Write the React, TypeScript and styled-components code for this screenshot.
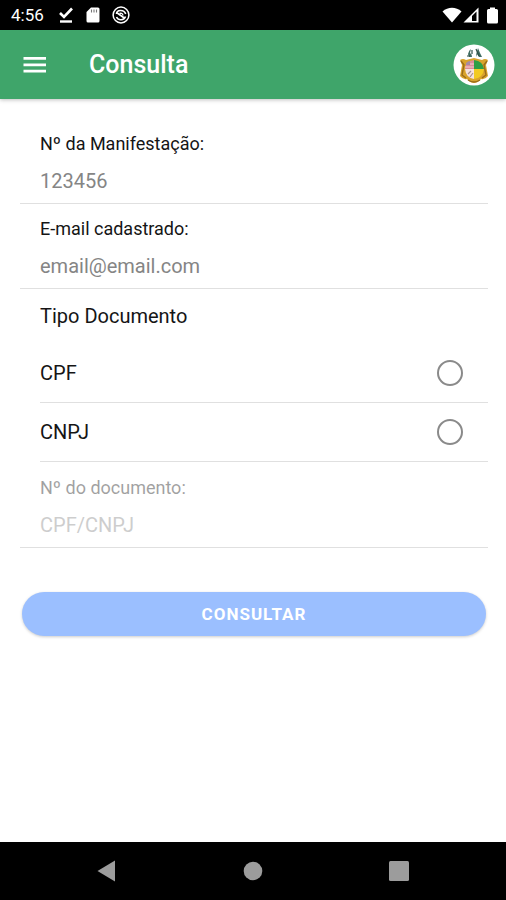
import React, { useState } from "react";
import styled, { createGlobalStyle } from "styled-components";

const GlobalStyle = createGlobalStyle`
  *, *::before, *::after { box-sizing: border-box; }
  body {
    margin: 0;
    background: #fff;
    color: #151515;
    font-family: Roboto, "Liberation Sans", sans-serif;
  }
`;

const Screen = styled.div`
  display: flex;
  flex-direction: column;
  min-height: 100vh;
`;

const StatusBar = styled.div`
  display: flex;
  align-items: center;
  justify-content: space-between;
  height: 30px;
  padding: 0 8px 0 11px;
  background: #000;
  color: #fff;
`;

const StatusGroup = styled.div<{ $gap: number }>`
  display: flex;
  align-items: center;
  gap: ${({ $gap }) => $gap}px;
`;

const Clock = styled.time`
  margin-right: 2px;
  font-size: 17px;
  line-height: 30px;
`;

const Header = styled.header`
  display: flex;
  align-items: center;
  height: 69px;
  padding: 0 11px 0 23px;
  background: #3fa56a;
  color: #fff;
  box-shadow: 0 1px 4px rgba(0, 0, 0, 0.25);
`;

const MenuButton = styled.button`
  display: flex;
  padding: 0;
  border: 0;
  background: none;
  color: inherit;
`;

const Title = styled.h1`
  flex: 1;
  margin: 0 0 0 42px;
  font-size: 25px;
  font-weight: 500;
  line-height: 32px;
`;

const Form = styled.form`
  flex: 1;
  padding: 20px 18px 20px 20px;
`;

const Field = styled.div<{ $disabled?: boolean }>`
  display: flex;
  flex-direction: column;
  gap: 10px;
  padding: 13px 20px 7px;
  border-bottom: 1px solid #e0e0e0;

  > * {
    opacity: ${({ $disabled }) => ($disabled ? 0.4 : 1)};
  }
`;

const FieldLabel = styled.label`
  font-size: 18px;
  line-height: 24px;
`;

const TextInput = styled.input`
  width: 100%;
  height: 30px;
  padding: 0;
  border: 0;
  outline: 0;
  background: none;
  color: inherit;
  font-family: inherit;
  font-size: 20px;

  &::placeholder {
    color: #858585;
    opacity: 1;
  }
`;

const Group = styled.fieldset`
  margin: 0;
  padding: 0 0 1px 20px;
  border: 0;
`;

const GroupTitle = styled.legend`
  padding: 0;
  font-size: 20px;
  line-height: 55px;
`;

const Option = styled.label`
  display: flex;
  align-items: center;
  justify-content: space-between;
  height: 59px;
  padding-right: 25px;
  border-bottom: 1px solid #e0e0e0;
  font-size: 20px;
`;

const Radio = styled.input`
  display: grid;
  place-content: center;
  width: 26px;
  height: 26px;
  margin: 0;
  border: 2px solid #8a8a8a;
  border-radius: 50%;
  appearance: none;

  &:checked {
    border-color: #3880ff;
  }

  &:checked::before {
    content: "";
    width: 12px;
    height: 12px;
    border-radius: 50%;
    background: #3880ff;
  }
`;

const SubmitButton = styled.button`
  display: block;
  width: calc(100% - 4px);
  height: 44px;
  margin: 44px 2px 0;
  border: 0;
  border-radius: 22px;
  background: #9bbfff;
  color: #fff;
  font-family: inherit;
  font-size: 17px;
  font-weight: 700;
  letter-spacing: 1px;
  text-transform: uppercase;
  box-shadow: 0 1px 3px rgba(0, 0, 0, 0.2);
`;

const NavBar = styled.nav`
  display: grid;
  grid-template-columns: repeat(3, 1fr);
  height: 58px;
  padding: 0 34px;
  background: #000;
`;

const NavButton = styled.button`
  display: flex;
  align-items: center;
  justify-content: center;
  padding: 0;
  border: 0;
  background: none;
`;

function DownloadDoneIcon() {
  return (
    <svg width="16" height="18" viewBox="0 0 16 18" fill="none" stroke="#fff">
      <path d="M2 7l4 4 8-8.500" strokeWidth="2.600" />
      <path d="M2 15.500h12" strokeWidth="2.400" />
    </svg>
  );
}

function SdCardIcon() {
  return (
    <svg width="14" height="16" viewBox="0 0 14 16">
      <path d="M5 0.500h7q1.500 0 1.500 1.500v12q0 1.500-1.500 1.500H2Q0.500 15.500 0.500 14V5z" fill="#fff" />
      <path d="M5.500 2.500v3M8 2.500v3M10.500 2.500v3" stroke="#777" strokeWidth="1.100" />
    </svg>
  );
}

function DataIcon() {
  return (
    <svg width="18" height="18" viewBox="0 0 18 18" fill="none" stroke="#fff">
      <circle cx="9" cy="9" r="7.900" strokeWidth="1.500" />
      <path d="M4.500 8c0-4.500 7.500-5 9.200 0M13.500 10.500c-1.500 4-7 4.500-9 0.500" strokeWidth="1.600" />
      <path d="M4.500 6.500l8.500 6" strokeWidth="1.600" />
      <path d="M7.500 7.500q3-1 3.500 2" strokeWidth="1.400" />
    </svg>
  );
}

function WifiIcon() {
  return (
    <svg width="20" height="16" viewBox="0 0 20 16">
      <path d="M0.500 4.500C6-0.500 14-0.500 19.500 4.500L10 15.500z" fill="#fff" />
    </svg>
  );
}

function SignalIcon() {
  return (
    <svg width="16" height="16" viewBox="0 0 16 16">
      <path d="M0.500 15.500L15.500 0.500v15z" fill="#fff" />
      <path d="M9 9v5H13.500V4.500z" fill="#000" />
    </svg>
  );
}

const BatterySvg = styled.svg`
  margin-left: 7px;
`;

function BatteryIcon() {
  return (
    <BatterySvg width="11" height="17" viewBox="0 0 11 17">
      <path d="M3 0.500h5v1.500h1.500q1.500 0 1.500 1.500v11.500q0 1.500-1.500 1.500h-8q-1.500 0-1.500-1.500v-11.500q0-1.500 1.500-1.500H3z" fill="#fff" />
    </BatterySvg>
  );
}

function MenuIcon() {
  return (
    <svg width="24" height="18" viewBox="0 0 24 18" fill="#fff">
      <path d="M0.500 1h22.500v2.800H0.500zM0.500 7.400h22.500v2.800H0.500zM0.500 13.800h22.500v2.800H0.500z" />
    </svg>
  );
}

function CrestIcon() {
  return (
    <svg width="42" height="42" viewBox="0 0 42 42" role="img" aria-label="Brasão">
      <circle cx="21" cy="21" r="20.500" fill="#fff" />
      <path d="M15 10q1-4 3-5l-1 4q2 1 2 4h-3zM23 11l2-7 2 5 2 4h-3l-2-3-1 3z" fill="#3f6b61" />
      <path d="M14 12h3M19 6v4M23 5l3 7" stroke="#2f5148" strokeWidth="1.200" />
      <path
        d="M7 16q3-2 6 0l4-1 4-1 4 1 4 1q3-2 6 0l-2 5 2 11q-3 4-7 3-3 4-7 4t-7-4q-4 1-7-3l2-11z"
        fill="#d9a32c"
      />
      <path
        d="M8 17l3 4-2 10 4 3M34 17l-3 4 2 10-4 3M15 36q6 4 12 0"
        fill="none"
        stroke="#9a6c1b"
        strokeWidth="1.400"
      />
      <path d="M12 25q0-8 9-9v9z" fill="#dc8c98" />
      <path d="M13 20h8M12 23h9" stroke="#f3cfd2" strokeWidth="1" />
      <path d="M13 19q2-2 4-2v4h-4z" fill="#a58aa5" />
      <path d="M21 25v-9q9 1 10 9z" fill="#2f9e45" />
      <path d="M12 25h9v10q-8-1-9-10z" fill="#f5e3df" />
      <path d="M21 25h10q-1 9-10 10z" fill="#f2ca22" />
      <path d="M15 30l3-3M17 33l3-4" stroke="#a58e90" strokeWidth="1.200" />
    </svg>
  );
}

export default function App() {
  const [documentType, setDocumentType] = useState("");
  const disabled = documentType === "";

  return (
    <>
      <GlobalStyle />
      <Screen>
        <StatusBar>
          <StatusGroup $gap={12}>
            <Clock>4:56</Clock>
            <DownloadDoneIcon />
            <SdCardIcon />
            <DataIcon />
          </StatusGroup>
          <StatusGroup $gap={1}>
            <WifiIcon />
            <SignalIcon />
            <BatteryIcon />
          </StatusGroup>
        </StatusBar>
        <Header>
          <MenuButton type="button" aria-label="Menu">
            <MenuIcon />
          </MenuButton>
          <Title>Consulta</Title>
          <CrestIcon />
        </Header>
        <Form onSubmit={(event) => event.preventDefault()}>
          <Field>
            <FieldLabel htmlFor="protocol">Nº da Manifestação:</FieldLabel>
            <TextInput id="protocol" inputMode="numeric" placeholder="123456" />
          </Field>
          <Field>
            <FieldLabel htmlFor="email">E-mail cadastrado:</FieldLabel>
            <TextInput id="email" type="email" placeholder="email@email.com" />
          </Field>
          <Group>
            <GroupTitle>Tipo Documento</GroupTitle>
            {["CPF", "CNPJ"].map((type) => (
              <Option key={type}>
                {type}
                <Radio
                  type="radio"
                  name="documentType"
                  value={type}
                  checked={documentType === type}
                  onChange={() => setDocumentType(type)}
                />
              </Option>
            ))}
          </Group>
          <Field $disabled={disabled}>
            <FieldLabel htmlFor="document">Nº do documento:</FieldLabel>
            <TextInput id="document" placeholder="CPF/CNPJ" disabled={disabled} />
          </Field>
          <SubmitButton type="submit" disabled={disabled}>
            Consultar
          </SubmitButton>
        </Form>
        <NavBar>
          <NavButton type="button" aria-label="Voltar">
            <svg width="20" height="22" viewBox="0 0 20 22">
              <path d="M0.500 11L18 0.500v21z" fill="#9c9c9c" />
            </svg>
          </NavButton>
          <NavButton type="button" aria-label="Início">
            <svg width="20" height="20" viewBox="0 0 20 20">
              <circle cx="10" cy="10" r="9.300" fill="#9c9c9c" />
            </svg>
          </NavButton>
          <NavButton type="button" aria-label="Recentes">
            <svg width="20" height="20" viewBox="0 0 20 20">
              <rect width="20" height="20" rx="1.500" fill="#9c9c9c" />
            </svg>
          </NavButton>
        </NavBar>
      </Screen>
    </>
  );
}
